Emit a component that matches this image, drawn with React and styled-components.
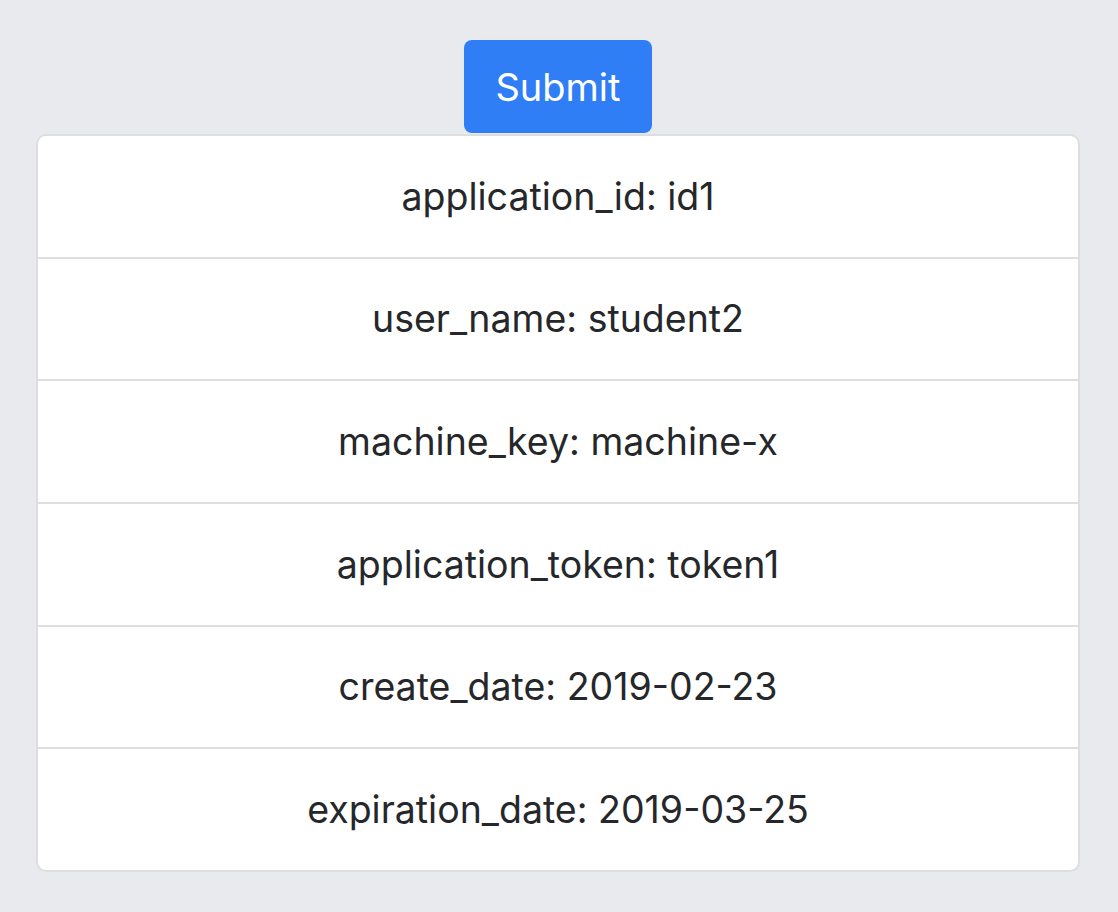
import React from 'react';
import styled, { createGlobalStyle } from 'styled-components';

const GlobalStyle = createGlobalStyle`
  html, body {
    margin: 0;
    padding: 0;
    background: #e9eaee;
  }
  body {
    font-family: Inter, 'Noto Sans', 'Liberation Sans', sans-serif;
  }
`;

const fields = [
  ['application_id', 'id1'],
  ['user_name', 'student2'],
  ['machine_key', 'machine-x'],
  ['application_token', 'token1'],
  ['create_date', '2019-02-23'],
  ['expiration_date', '2019-03-25']
];

export default function App() {
  return (
    <>
      <GlobalStyle />
      <Page>
        <SubmitButton type='button'>Submit</SubmitButton>
        <List>
          {fields.map(([key, value]) => (
            <Item key={key}>
              {key}: {value}
            </Item>
          ))}
        </List>
      </Page>
    </>
  );
}

const Page = styled.div`
  display: flex;
  flex-direction: column;
  align-items: center;
  padding: 40px 38px 40px 36px;
  min-height: 912px;
  box-sizing: border-box;
`;

const SubmitButton = styled.button`
  width: 188px;
  height: 93px;
  margin-bottom: 1px;
  border: none;
  border-radius: 8px;
  background: #307ef5;
  color: #fff;
  font-family: inherit;
  font-size: 38px;
  cursor: pointer;
`;

const List = styled.ul`
  list-style: none;
  margin: 0;
  padding: 0;
  width: 100%;
  background: #fff;
  border: 2px solid #dedede;
  border-radius: 10px;
  box-sizing: border-box;
`;

const Item = styled.li`
  display: flex;
  align-items: center;
  justify-content: center;
  height: 120.67px;
  color: #25272a;
  font-size: 37.5px;

  & + & {
    border-top: 2px solid #dedede;
  }
`;
